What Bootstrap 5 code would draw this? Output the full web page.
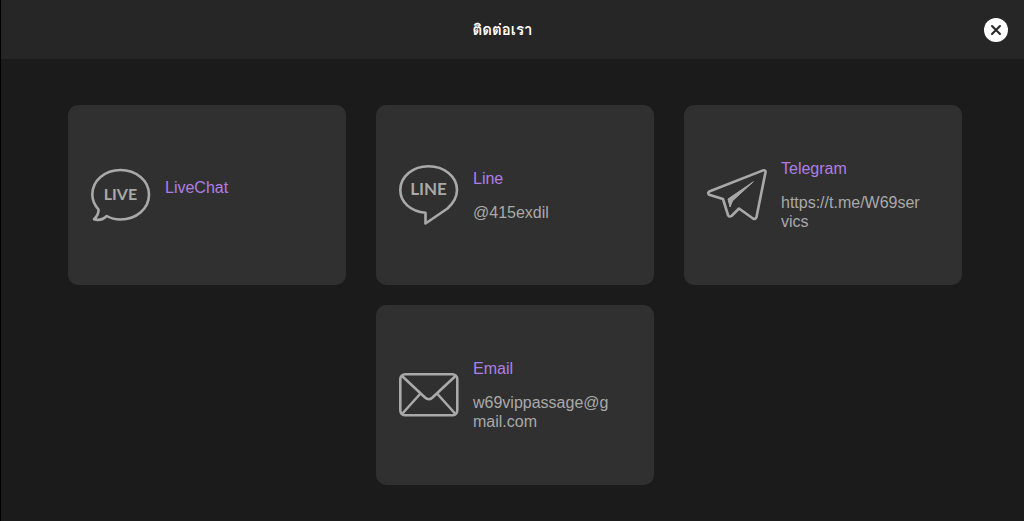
<!DOCTYPE html>
<html lang="th">
<head>
<meta charset="utf-8">
<meta name="viewport" content="width=device-width, initial-scale=1">
<title>ติดต่อเรา</title>
<link rel="stylesheet" href="https://cdn.jsdelivr.net/npm/bootstrap@5.3.0/dist/css/bootstrap.min.css">
<style>
body { background: #1b1b1b; color: #a9a9a9; font-family: "Liberation Sans", Arial, sans-serif; font-size: 16px; line-height: 19px; }
.panel { border-left: 1px solid #000; }
.panel-head { background: #262626; height: 59px; padding: 0 16px 0 20px; }
.panel-title { color: #fff; font-family: Tahoma, Loma, Waree, "Noto Sans Thai Looped", "Noto Sans", sans-serif; font-size: 15px; font-weight: 600; line-height: 24px; }
.close-btn { width: 24px; height: 24px; }
.panel-body { padding: 46px 62px 36px 67px; }
.contact-list { --bs-gutter-x: 30px; --bs-gutter-y: 20px; }
.contact { background: #303030; border-radius: 10px; min-height: 180px; padding: 0 36px 0 23px; gap: 14px; color: #a9a9a9; }
.contact:hover { color: #a9a9a9; }
.contact-name { color: #b07de8; font-size: 16px; line-height: 19px; font-weight: 400; margin-bottom: 15px; }
.contact-icon { fill: none; stroke: #a9a9a9; stroke-width: 2.6; stroke-linejoin: round; stroke-linecap: round; }
.contact-icon .fold { fill: #a9a9a9; stroke-width: 1; }
.contact-icon text { fill: #a9a9a9; stroke: none; font-family: Lato, sans-serif; font-weight: 700; text-anchor: middle; }
</style>
</head>
<body>
<div class="panel min-vh-100">
  <header class="panel-head d-flex align-items-center">
    <h1 class="panel-title flex-grow-1 text-center mb-0">ติดต่อเรา</h1>
    <button type="button" class="close-btn btn p-0 border-0 rounded-circle d-flex" aria-label="ปิด">
      <svg width="24" height="24" viewBox="0 0 24 24"><circle cx="12" cy="12" r="12" fill="#fff"/><path d="M8 8l8 8M16 8l-8 8" stroke="#262626" stroke-width="2" stroke-linecap="round"/></svg>
    </button>
  </header>
  <main class="panel-body">
    <div class="contact-list row justify-content-center">
      <div class="col-4">
        <a href="#" class="contact d-flex align-items-center text-decoration-none">
          <svg class="contact-icon flex-shrink-0" width="60" height="60" viewBox="0 0 60 60" aria-hidden="true">
            <path d="M7.500 44.500C3.500 40 1.300 35 1.300 29.500 1.300 15.500 14 5 29.500 5S58 15.500 58 29.500 45.500 54.500 29.500 54.500C25 54.500 20 53.500 15.800 51 12.500 54.200 7.500 55.500 3 54.300 6 51.500 7.700 48.200 7.500 44.500Z"/>
            <text x="29.500" y="35" font-size="16">LIVE</text>
          </svg>
          <div>
            <h2 class="contact-name">LiveChat</h2>
          </div>
        </a>
      </div>
      <div class="col-4">
        <a href="#" class="contact d-flex align-items-center text-decoration-none">
          <svg class="contact-icon flex-shrink-0" width="60" height="60" viewBox="0 0 60 60" aria-hidden="true">
            <path d="M26.500 47.800C12 46.500 1.300 37.500 1.300 25 1.300 11.500 14 1.300 29.500 1.300S58 11.500 58 25C58 32.500 54.500 38 48.500 43.500L26.500 58.500Z"/>
            <text x="29.500" y="30" font-size="17">LINE</text>
          </svg>
          <div class="text-break">
            <h2 class="contact-name">Line</h2>
            <p class="mb-0">@415exdil</p>
          </div>
        </a>
      </div>
      <div class="col-4">
        <a href="#" class="contact d-flex align-items-center text-decoration-none">
          <svg class="contact-icon flex-shrink-0" width="60" height="60" viewBox="0 0 60 60" aria-hidden="true">
            <path d="M2.200 26.500L56 5.400Q58.800 4.700 58.500 7.200L49.500 52Q48.500 54.800 46 53.500L32 43.500 24.500 51Q22 52.500 21 50L16 34 2.200 29.800Q.2 28 2.200 26.500Z"/>
            <path class="fold" d="M46 17L21 34 23 42 25.500 36Z"/>
          </svg>
          <div class="text-break">
            <h2 class="contact-name">Telegram</h2>
            <p class="mb-0">https://t.me/W69servics</p>
          </div>
        </a>
      </div>
      <div class="col-4">
        <a href="#" class="contact d-flex align-items-center text-decoration-none">
          <svg class="contact-icon flex-shrink-0" width="60" height="60" viewBox="0 0 60 60" aria-hidden="true">
            <rect x="1.300" y="9.300" width="57" height="41" rx="5"/>
            <path d="M3 11L26 32.500Q29.800 36 33.500 32.500L56.500 11M3 49L21.500 28.500M56.500 49L38 28.500"/>
          </svg>
          <div class="text-break">
            <h2 class="contact-name">Email</h2>
            <p class="mb-0">w69vippassage@gmail.com</p>
          </div>
        </a>
      </div>
    </div>
  </main>
</div>
<script src="https://cdn.jsdelivr.net/npm/bootstrap@5.3.0/dist/js/bootstrap.bundle.min.js"></script>
</body>
</html>
